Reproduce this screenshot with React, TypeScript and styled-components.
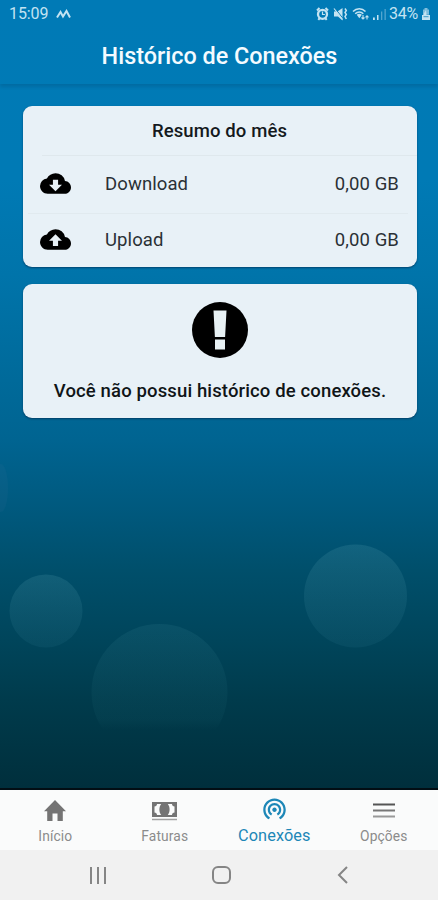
import React from 'react';
import styled, { createGlobalStyle } from 'styled-components';
import { MdCloudDownload, MdCloudUpload, MdWifiTethering } from 'react-icons/md';

const GlobalStyle = createGlobalStyle`
  * { box-sizing: border-box; }
  body { margin: 0; font-family: Roboto, sans-serif; }
  svg { display: block; flex: none; }
`;

const Screen = styled.div`
  width: 438px;
  height: 900px;
  display: flex;
  flex-direction: column;
  overflow: hidden;
  position: relative;
  isolation: isolate;
  background: linear-gradient(
    180deg,
    #007ab6 0px,
    #007ab5 180px,
    #0074aa 275px,
    #006a9a 380px,
    #006491 440px,
    #00587c 515px,
    #004f6b 570px,
    #00455b 640px,
    #003b4c 700px,
    #002f3c 788px
  );
`;

const Bubbles = styled.svg`
  position: absolute;
  left: 0;
  top: 0;
  z-index: -1;
`;

const StatusBar = styled.div`
  height: 28px;
  flex: none;
  display: flex;
  align-items: center;
  padding: 0 7px 0 9px;
  color: #c3e3f2;
`;

const Clock = styled.span`
  font-size: 16px;
  line-height: 28px;
  letter-spacing: -0.1px;
  margin-right: 8px;
`;

const StatusIcons = styled.div`
  margin-left: auto;
  display: flex;
  align-items: center;
`;

const StatusGroup = styled.div`
  display: flex;
  align-items: center;
  gap: 4px;
  margin-right: 3px;
`;

const Battery = styled.span`
  font-size: 16px;
  line-height: 28px;
  width: 32px;
  letter-spacing: -0.2px;
  white-space: nowrap;
`;

const Header = styled.header`
  height: 56px;
  flex: none;
  display: flex;
  align-items: center;
  justify-content: center;
  box-shadow: 0 3px 3px rgba(0, 60, 100, 0.22);
`;

const Title = styled.h1`
  margin: 0;
  font-size: 23.4px;
  font-weight: 500;
  line-height: 28px;
  color: #f4fbff;
  white-space: nowrap;
  padding-left: 1px;
`;

const Content = styled.main`
  flex: 1;
  display: flex;
  flex-direction: column;
  gap: 17px;
  padding: 22px 21px 0 23px;
`;

const Card = styled.section`
  background: #e8f1f7;
  border-radius: 9px;
  box-shadow: 0 1px 2px rgba(0, 35, 70, 0.6);
`;

const CardTitle = styled.h2`
  margin: 0 0 0 19px;
  padding-right: 20px;
  height: 50px;
  font-size: 18.5px;
  font-weight: 500;
  letter-spacing: 0.12px;
  line-height: 50px;
  text-align: center;
  color: #14191d;
  border-bottom: 1px solid #dfe8ed;
`;

const Row = styled.div<{ $height: number; $divided?: boolean }>`
  height: ${(p) => p.$height}px;
  margin: 0 9px 0 5px;
  padding: 0 9px 2px 12px;
  display: flex;
  align-items: center;
  color: #2a3035;
  font-size: 18.5px;
  letter-spacing: 0.1px;
  border-bottom: ${(p) => (p.$divided ? '1px solid #e1eaef' : 'none')};

  svg { color: #000; }
`;

const RowLabel = styled.span`
  margin-left: 34px;
  flex: 1;
`;

const RowValue = styled.span`
  white-space: nowrap;
`;

const EmptyCard = styled(Card)`
  height: 134px;
  display: flex;
  flex-direction: column;
  align-items: center;
  padding-top: 18px;
`;

const EmptyText = styled.p`
  margin: 20px 0 0;
  font-size: 18.5px;
  font-weight: 500;
  letter-spacing: 0.13px;
  line-height: 26px;
  color: #101517;
  white-space: nowrap;
`;

const TabBar = styled.nav`
  height: 62px;
  flex: none;
  display: grid;
  grid-template-columns: repeat(4, 1fr);
  background: #fafbfb;
  border-top: 2px solid #020e14;
`;

const Tab = styled.div<{ $active?: boolean }>`
  display: flex;
  flex-direction: column;
  align-items: center;
  justify-content: flex-end;
  gap: ${(p) => (p.$active ? 5 : 6)}px;
  padding: 0 0 5px 1px;
  color: ${(p) => (p.$active ? '#1d87b7' : '#747474')};
  font-size: ${(p) => (p.$active ? 16.3 : 13.8)}px;
  line-height: 18px;

  span {
    color: ${(p) => (p.$active ? '#1d87b7' : '#8b8b8b')};
    letter-spacing: 0.1px;
  }
`;

const SystemBar = styled.footer`
  height: 50px;
  flex: none;
  display: flex;
  align-items: center;
  justify-content: space-between;
  padding: 0 89px;
  background: #f1f1f1;
`;

const AlarmIcon = () => (
  <svg width="13" height="14" viewBox="0 0 13 14" fill="none" stroke="currentColor">
    <path d="M1 3.500 3.500 1M12 3.500 9.500 1M2.300 12.800l1.500-1.800M10.700 12.800 9.200 11" strokeWidth="2" />
    <circle cx="6.500" cy="7.300" r="4.500" strokeWidth="2.300" />
    <path d="M6.500 4.500v3h2.400" strokeWidth="1.200" />
  </svg>
);

const MuteIcon = () => (
  <svg width="15" height="14" viewBox="0 0 15 14" fill="currentColor">
    <path d="M1 4.500h3.500L9.500 1v12.500L5 9.500H1z" />
    <path d="M1.800 1 10 11.500" stroke="#007ab6" strokeWidth="1" />
    <path d="M1 1.500 9.500 12.500" stroke="currentColor" strokeWidth="1.200" />
    <path d="m12 1.500 1.300 2-1.300 2 1.300 2-1.300 2 1.300 2.500" fill="none" stroke="currentColor" strokeWidth="1.500" />
  </svg>
);

const WifiIcon = () => (
  <svg width="17" height="14" viewBox="0 0 17 14" fill="none" stroke="currentColor" strokeWidth="1.500">
    <path d="M1 4.500C4.500.8 10 .8 13.500 4.500M3.200 6.800c2.300-2.300 5.800-2.300 8.100 0" />
    <path d="m4.700 7.700 2.600 3.600 2.600-3.600c-1.600-1.300-3.600-1.300-5.200 0z" fill="currentColor" stroke="none" />
    <path d="M11 8v4M9.500 10.500 11 12l1.500-1.500M15 12.500V9M13.500 10.300 15 8.800l1.500 1.500" strokeWidth="1.100" />
  </svg>
);

const SignalIcon = () => (
  <svg width="13" height="14" viewBox="0 0 13 14" fill="currentColor">
    <path d="M0 10.500h1.800V13H0zM4 8h1.500v5H4z" />
    <path d="M8 4.500h1.300V13H8zM11.500 2h1.300v11h-1.300z" opacity=".42" />
  </svg>
);

const BatteryIcon = () => (
  <svg width="10" height="14" viewBox="0 0 10 14" fill="currentColor">
    <path d="M3.500 1h3v1.500H8V7H2V2.500h1.500z" opacity=".65" />
    <path d="M1 8h8v5H1z" />
    <path d="M5 3 2 8l-1 2h8L8 7.500H5.500z" />
    <path d="M2.500 9.700h5" stroke="#3c9bc8" />
  </svg>
);

const HomeIcon = () => (
  <svg width="22" height="21" viewBox="0 0 22 21" fill="currentColor">
    <path d="M11 0 0 11.200h3.200V21h5.300v-7.500h5V21h5.300v-9.800H22z" />
  </svg>
);

const CashIcon = () => (
  <svg width="25" height="20" viewBox="0 0 25 20">
    <path d="M0 1h25v15H0z" fill="#747474" />
    <path
      d="M5 3h4.200C6.800 6 6.800 11 9.200 14H5c0-1.500-1-2.500-2.500-2.500v-6C4 5.500 5 4.500 5 3zM20 3h-4.200c2.400 3 2.400 8 0 11H20c0-1.500 1-2.500 2.500-2.500v-6C21 5.500 20 4.500 20 3z"
      fill="#fafbfb"
    />
    <path d="M0 18.500h25" stroke="#a1a1a1" strokeWidth="1.500" />
  </svg>
);

const MenuIcon = () => (
  <svg width="22" height="20" viewBox="0 0 22 20" fill="none" strokeWidth="2">
    <path d="M0 3.500h22" stroke="#555" />
    <path d="M0 9.500h22" stroke="#777" />
    <path d="M0 15.500h22" stroke="#999" />
  </svg>
);

const AlertIcon = () => (
  <svg width="56" height="56" viewBox="0 0 56 56">
    <circle cx="28" cy="28" r="28" />
    <path d="M21.500 8.500h13l-1.400 26.500H22.900zM23 37.500h10v10H23z" fill="#e8f1f4" />
  </svg>
);

export default function App() {
  return (
    <>
      <GlobalStyle />
      <Screen>
        <Bubbles width="438" height="788" viewBox="0 0 438 788">
          <defs>
            <linearGradient id="bubble" x1="0" y1="0" x2="0" y2="1">
              <stop offset="0" stopColor="#68b0bd" stopOpacity=".17" />
              <stop offset="1" stopColor="#38859c" stopOpacity=".12" />
            </linearGradient>
            <linearGradient id="fading" x1="0" y1="0" x2="0" y2="1">
              <stop offset="0" stopColor="#4a96a5" stopOpacity=".13" />
              <stop offset=".7" stopColor="#287783" stopOpacity=".09" />
              <stop offset=".78" stopColor="#287783" stopOpacity="0" />
            </linearGradient>
          </defs>
          <circle cx="46" cy="611" r="36.500" fill="url(#bubble)" />
          <circle cx="355.500" cy="596" r="51.500" fill="url(#bubble)" />
          <circle cx="159.500" cy="692" r="68" fill="url(#fading)" />
          <ellipse cx="1" cy="488" rx="7" ry="24" fill="#44769a" opacity=".1" />
        </Bubbles>

        <StatusBar>
          <Clock>15:09</Clock>
          <svg width="15" height="10" viewBox="0 0 15 10" fill="none" stroke="currentColor" strokeWidth="2">
            <path d="M1 8.500 4.500 3l2.500 4.500L10.500 2 14 8.500" />
          </svg>
          <StatusIcons>
            <StatusGroup>
              <AlarmIcon />
              <MuteIcon />
              <WifiIcon />
              <SignalIcon />
            </StatusGroup>
            <Battery>34%</Battery>
            <BatteryIcon />
          </StatusIcons>
        </StatusBar>
        <Header>
          <Title>Histórico de Conexões</Title>
        </Header>

        <Content>
          <Card>
            <CardTitle>Resumo do mês</CardTitle>
            <Row $height={58} $divided>
              <MdCloudDownload size={31} />
              <RowLabel>Download</RowLabel>
              <RowValue>0,00 GB</RowValue>
            </Row>
            <Row $height={53}>
              <MdCloudUpload size={31} />
              <RowLabel>Upload</RowLabel>
              <RowValue>0,00 GB</RowValue>
            </Row>
          </Card>
          <EmptyCard>
            <AlertIcon />
            <EmptyText>Você não possui histórico de conexões.</EmptyText>
          </EmptyCard>
        </Content>

        <TabBar>
          <Tab>
            <HomeIcon />
            <span>Início</span>
          </Tab>
          <Tab>
            <CashIcon />
            <span>Faturas</span>
          </Tab>
          <Tab $active>
            <MdWifiTethering size={27} />
            <span>Conexões</span>
          </Tab>
          <Tab>
            <MenuIcon />
            <span>Opções</span>
          </Tab>
        </TabBar>
        <SystemBar>
          <svg width="17" height="17" viewBox="0 0 17 17" stroke="#858585" strokeWidth="2">
            <path d="M2 0v17M9 0v17M16 0v17" />
          </svg>
          <svg width="19" height="18" viewBox="0 0 19 18" fill="none" stroke="#858585" strokeWidth="2">
            <rect x="1" y="1" width="17" height="16" rx="5" />
          </svg>
          <svg width="12" height="18" viewBox="0 0 12 18" fill="none" stroke="#858585" strokeWidth="2">
            <path d="M10 1 2 9l8 8" />
          </svg>
        </SystemBar>
      </Screen>
    </>
  );
}
